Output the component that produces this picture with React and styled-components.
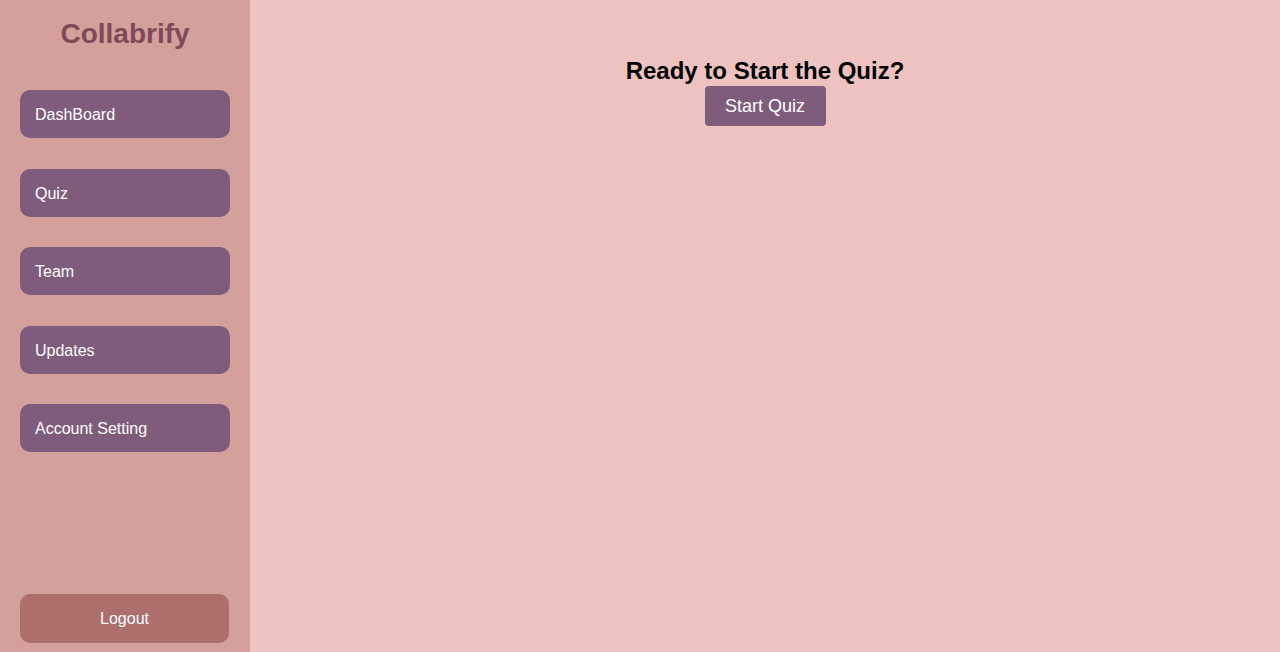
import React from "react";
import styled, { createGlobalStyle } from "styled-components";

const Global = createGlobalStyle`
  html, body { margin: 0; padding: 0; height: 100%; }
  body { font-family: "Liberation Sans", Arial, sans-serif; background: #eec3bf; }
  #root { height: 100%; }
`;

const Layout = styled.div`
  display: flex;
  height: 652px;
`;

const Sidebar = styled.aside`
  width: 250px;
  flex: 0 0 250px;
  background: #d4a09b;
  display: flex;
  flex-direction: column;
  box-sizing: border-box;
  padding: 17px 20px 9px;
`;

const Brand = styled.h1`
  margin: 0;
  font-size: 28px;
  line-height: 34px;
  font-weight: 700;
  text-align: center;
  color: #7e4a57;
`;

const Nav = styled.nav`
  display: flex;
  flex-direction: column;
  gap: 30.5px;
  margin-top: 39px;
`;

const NavButton = styled.button`
  height: 48px;
  width: 210px;
  border: none;
  border-radius: 10px;
  background: #7f5c7c;
  color: #ffffff;
  font-family: inherit;
  font-size: 16px;
  text-align: left;
  padding: 2px 15px 0;
  cursor: pointer;
`;

const Logout = styled.button`
  margin-top: auto;
  height: 49px;
  width: 209px;
  border: none;
  border-radius: 10px;
  background: #ad6f6b;
  color: #ffffff;
  font-family: inherit;
  font-size: 16px;
  text-align: center;
  cursor: pointer;
`;

const Main = styled.main`
  flex: 1;
  display: flex;
  flex-direction: column;
  align-items: center;
  padding-top: 58px;
`;

const Heading = styled.h2`
  margin: 0;
  font-size: 24px;
  line-height: 26px;
  padding-bottom: 2px;
  font-weight: 700;
  color: #000;
`;

const StartButton = styled.button`
  height: 40px;
  width: 121px;
  border: none;
  border-radius: 4px;
  background: #7f5c7c;
  color: #fff;
  font-family: inherit;
  font-size: 18px;
  cursor: pointer;
`;

const items = ["DashBoard", "Quiz", "Team", "Updates", "Account Setting"];

export default function App() {
  return (
    <>
      <Global />
      <Layout>
        <Sidebar>
          <Brand>Collabrify</Brand>
          <Nav>
            {items.map((it) => (
              <NavButton key={it}>{it}</NavButton>
            ))}
          </Nav>
          <Logout>Logout</Logout>
        </Sidebar>
        <Main>
          <Heading>Ready to Start the Quiz?</Heading>
          <StartButton>Start Quiz</StartButton>
        </Main>
      </Layout>
    </>
  );
}
